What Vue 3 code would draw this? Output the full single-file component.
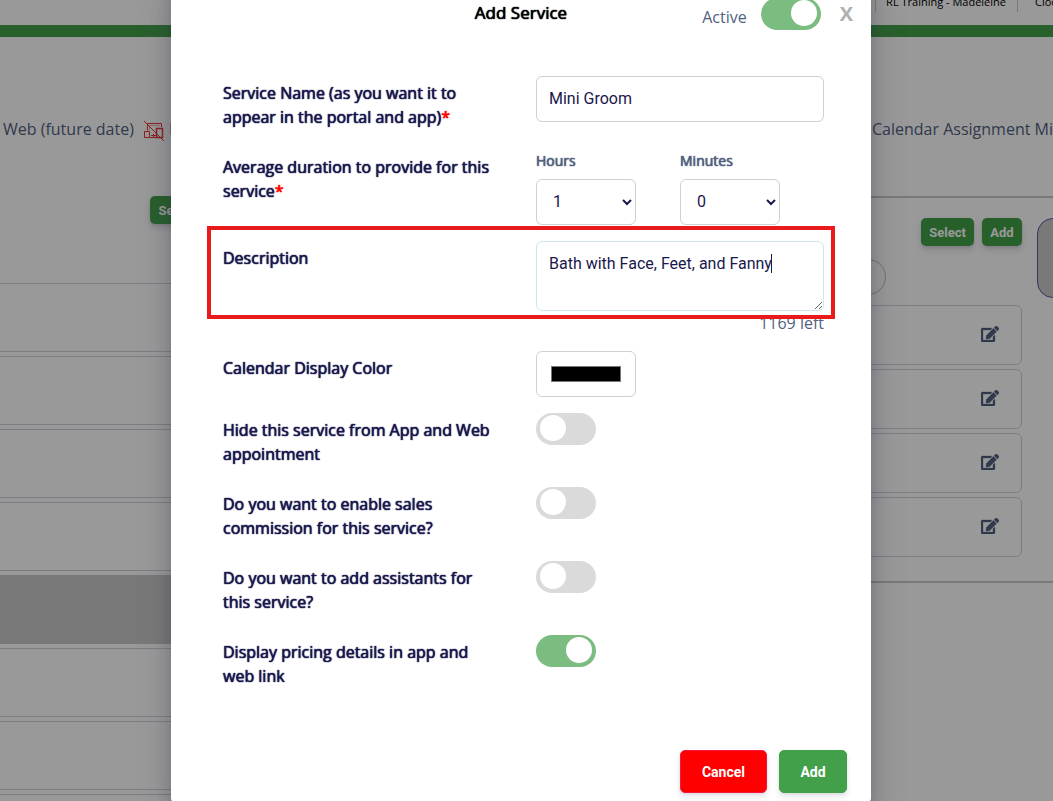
<script setup>
import { ref } from 'vue'

const active = ref(true)
const name = ref('Mini Groom')
const hours = ref('1')
const minutes = ref('0')
const description = ref('Bath with Face, Feet, and Fanny')
const color = ref('#000000')
const options = ref([
  { id: 'hide', label: 'Hide this service from App and Web appointment', on: false },
  { id: 'commission', label: 'Do you want to enable sales commission for this service?', on: false },
  { id: 'assistants', label: 'Do you want to add assistants for this service?', on: false },
  { id: 'pricing', label: 'Display pricing details in app and web link', on: true }
])
const rows = [0, 1, 2, 3, 4, 5, 6, 7]
const cards = [0, 1, 2, 3]
</script>

<template>
  <div class="screen">
    <div class="page">
      <header class="topbar">
        <span class="account">RL Training - Madeleine</span>
        <span class="clock">Clock</span>
      </header>
      <div class="legend">
        <div class="legend-left">
          <span>Web (future date)</span>
          <svg class="device" viewBox="0 0 20 20" fill="none" stroke="#e53935">
            <path d="M3.500 9.500V2.500H17.500V6M7 14.500H12M6 16.500H13M9.500 13V16" />
            <path d="M5 4.500H16M5.500 5V9" stroke-opacity=".4" />
            <path d="M.5 10.500H5.500V16.500H.5Z" />
            <path d="M12.500 7.500H18.500V16.500H12.500Z" stroke-width="1.500" />
            <path d="M0 0L20 20" />
          </svg>
          <span>I</span>
        </div>
        <div class="legend-right">Calendar Assignment Mi</div>
      </div>
      <div class="columns">
        <section class="left">
          <div class="left-actions"><button class="small" type="button">Select</button></div>
          <div class="rows">
            <div v-for="r in rows" :key="r" class="row" :class="{ selected: r === 4 }"></div>
          </div>
        </section>
        <section class="right">
          <div class="panel">
            <div class="panel-actions">
              <button class="small" type="button">Select</button>
              <button class="small" type="button">Add</button>
            </div>
            <input class="search" type="text" aria-label="Search" />
            <div class="cards">
              <div v-for="c in cards" :key="c" class="card">
                <button class="edit" type="button" aria-label="Edit">
                  <svg viewBox="0 0 576 512" fill="currentColor" stroke="currentColor" stroke-width="10">
                    <path d="M402.600 83.200l90.200 90.200c3.800 3.800 3.800 10 0 13.800L274.400 405.600l-92.800 10.300c-12.400 1.400-22.900-9.100-21.500-21.500l10.300-92.800L388.800 83.200c3.800-3.800 10-3.800 13.800 0zm162-22.900l-48.800-48.800c-15.200-15.200-39.900-15.200-55.200 0l-35.400 35.400c-3.800 3.800-3.800 10 0 13.800l90.200 90.200c3.800 3.800 10 3.800 13.800 0l35.400-35.400c15.200-15.300 15.200-40 0-55.200zM384 346.200V448H64V128h229.800c3.200 0 6.200-1.300 8.500-3.500l40-40c7.600-7.600 2.200-20.500-8.500-20.500H48C21.500 64 0 85.500 0 112v352c0 26.500 21.500 48 48 48h352c26.500 0 48-21.500 48-48V306.200c0-10.700-12.900-16-20.500-8.500l-40 40c-2.200 2.300-3.500 5.300-3.500 8.500z" />
                  </svg>
                </button>
              </div>
            </div>
          </div>
          <div class="side-tab"></div>
        </section>
      </div>
    </div>

    <div class="overlay">
      <form class="modal" role="dialog" aria-labelledby="dialog-title" @submit.prevent>
        <header class="modal-head">
          <h2 id="dialog-title">Add Service</h2>
          <div class="status">
            <label for="active">Active</label>
            <input id="active" v-model="active" class="toggle" type="checkbox" />
            <button class="close" type="button" aria-label="Close">X</button>
          </div>
        </header>

        <div class="fields">
          <div class="field">
            <label class="caption" for="name">Service Name (as you want it to appear in the portal and app)<span class="required">*</span></label>
            <input id="name" v-model="name" class="control" type="text" />
          </div>
          <div class="field">
            <span id="duration" class="caption">Average duration to provide for this service<span class="required">*</span></span>
            <div class="duration" role="group" aria-labelledby="duration">
              <div>
                <label class="unit" for="hours">Hours</label>
                <select id="hours" v-model="hours" class="control short">
                  <option>0</option>
                  <option>1</option>
                  <option>2</option>
                </select>
              </div>
              <div>
                <label class="unit" for="minutes">Minutes</label>
                <select id="minutes" v-model="minutes" class="control short">
                  <option>0</option>
                  <option>15</option>
                  <option>30</option>
                </select>
              </div>
            </div>
          </div>
          <div class="field marked">
            <label class="caption" for="description">Description</label>
            <div class="area-wrap">
              <textarea id="description" v-model="description" class="control area"></textarea>
              <span class="caret"></span>
              <div class="left-count">1169 left</div>
            </div>
          </div>
          <div class="field">
            <label class="caption" for="color">Calendar Display Color</label>
            <input id="color" v-model="color" class="control short swatch" type="color" />
          </div>
          <div v-for="o in options" :key="o.id" class="field">
            <label class="caption" :for="o.id">{{ o.label }}</label>
            <input :id="o.id" v-model="o.on" class="toggle" type="checkbox" />
          </div>
        </div>

        <footer class="modal-foot">
          <button class="action cancel" type="button">Cancel</button>
          <button class="action" type="submit">Add</button>
        </footer>
      </form>
    </div>
  </div>
</template>

<style>
body {
  margin: 0;
  overflow: hidden;
}
</style>

<style scoped>
* {
  box-sizing: border-box;
}
.screen {
  position: relative;
  height: 100vh;
  overflow: hidden;
  background: #fff;
  color: #525f7f;
  font-family: "Open Sans", sans-serif;
  font-size: 16px;
  line-height: 24px;
}
button,
input,
select,
textarea {
  font-family: Roboto, sans-serif;
}

/* page behind the dialog */
.page {
  margin-top: -24px;
}
.topbar {
  height: 61px;
  padding-top: 16px;
  border-bottom: 12px solid #43a04a;
  display: flex;
  justify-content: flex-end;
  align-items: flex-start;
  color: #000;
  font-size: 11px;
  line-height: 20px;
  white-space: nowrap;
}
.account {
  padding: 0 11px 0 10px;
  border-left: 1px solid #ccc;
  border-right: 1px solid #ccc;
}
.clock {
  flex: 0 0 35px;
  min-width: 0;
  padding-left: 17px;
  overflow: hidden;
}
.legend {
  display: flex;
  justify-content: space-between;
  padding-top: 80px;
  white-space: nowrap;
}
.legend-left {
  display: flex;
  align-items: center;
  padding-left: 3px;
}
.device {
  width: 20px;
  height: 20px;
  margin: 4px 5px 0 10px;
}
.legend-right {
  flex: 0 0 181px;
  overflow: hidden;
}
.columns {
  display: flex;
  justify-content: space-between;
  margin-top: 55px;
}
.left {
  width: 21%;
}
.left-actions {
  display: flex;
  justify-content: flex-end;
  padding-right: 18px;
}
.rows {
  display: grid;
  gap: 4px;
  margin-top: 59px;
}
.row {
  height: 69px;
  border: 1px solid #cbd3dc;
  border-left: 0;
}
.row.selected {
  background: #cacaca;
  border-color: #cacaca;
}
.small {
  min-width: 40px;
  height: 28px;
  padding: 0 8px;
  border: 0;
  border-radius: 5px;
  background: #43a04a;
  box-shadow: 0 4px 6px rgba(50, 50, 93, 0.15), 0 1px 3px rgba(0, 0, 0, 0.1);
  color: #fff;
  font-size: 13px;
  font-weight: 700;
}
.right {
  flex: 0 1 356px;
  display: flex;
  height: 387px;
  padding-top: 20px;
  border-top: 2px solid #cacaca;
  border-bottom: 2px solid #cacaca;
}
.panel {
  flex: 1;
}
.panel-actions {
  display: flex;
  justify-content: flex-end;
  gap: 8px;
}
.search {
  display: block;
  width: 58%;
  height: 36px;
  margin-top: 13px;
  border: 1px solid #bbb;
  border-radius: 18px;
}
.cards {
  display: grid;
  gap: 4px;
  margin-top: 10px;
}
.card {
  display: flex;
  align-items: center;
  justify-content: flex-end;
  height: 60px;
  padding: 0 22px 2px 0;
  border: 1px solid #cbd3dc;
  border-radius: 6px;
}
.edit {
  display: flex;
  padding: 0;
  border: 0;
  background: none;
  color: #525f7f;
}
.edit svg {
  width: 18px;
  height: 16px;
}
.side-tab {
  flex: 0 0 32px;
  height: 80px;
  margin: 0 -16px 0 15px;
  border: 1px solid #525f9f;
  border-radius: 16px;
  background: #cacaca;
}

/* dialog */
.overlay {
  position: absolute;
  inset: 0;
  padding-right: 11px;
  background: rgba(0, 0, 0, 0.4);
}
.modal {
  max-width: 700px;
  margin: -24px auto 0;
  background: #fff;
  border-radius: 4px;
  box-shadow: 0 15px 35px rgba(50, 50, 93, 0.25), 0 5px 15px rgba(0, 0, 0, 0.17);
}
.modal-head {
  display: grid;
  grid-template-columns: 1fr auto 1fr;
  align-items: start;
  padding: 22px 18px 0;
}
h2,
.caption,
.unit {
  font-weight: 400;
  text-shadow: 0 0 1px currentColor, 0 0 1px currentColor;
}
h2 {
  grid-column: 2;
  margin: 0;
  padding-top: 3px;
  color: #000;
  font-size: 17px;
  line-height: 24px;
}
.status {
  display: flex;
  justify-content: flex-end;
}
.status label {
  padding: 7px 14px 0 0;
}
.close {
  margin-left: 19px;
  padding: 0;
  border: 0;
  background: none;
  color: #b0b0b0;
  font-family: "Open Sans", sans-serif;
  font-size: 20px;
  font-weight: 700;
  line-height: 24px;
}
.toggle {
  appearance: none;
  position: relative;
  width: 60px;
  height: 32px;
  margin: 0;
  border-radius: 16px;
  background: #dadada;
}
.toggle::before {
  content: "";
  position: absolute;
  top: 2px;
  left: 4px;
  width: 26px;
  height: 26px;
  border-radius: 50%;
  background: #fff;
}
.toggle:checked {
  background: #7bbc80;
}
.toggle:checked::before {
  left: 30px;
}
.fields {
  display: grid;
  gap: 16px;
  padding: 46px 47px 0 52px;
}
.field {
  display: grid;
  grid-template-columns: 313px 1fr;
  align-items: start;
}
.caption {
  padding: 5px 40px 5px 0;
  color: #1a174d;
}
.required {
  color: #f00;
}
.control {
  display: block;
  width: 100%;
  height: 46px;
  margin: 0;
  padding: 10px 12px 12px;
  border: 1px solid #cad1d7;
  border-radius: 6px;
  background: #fff;
  color: #1a174d;
  font-size: 16px;
  line-height: 24px;
  outline: 0;
}
.control.short {
  width: 100px;
}
.duration {
  display: grid;
  grid-template-columns: 1fr 1fr;
}
.unit {
  display: block;
  margin-bottom: 8px;
  font-size: 14px;
  line-height: 21px;
}
.area-wrap {
  position: relative;
}
.control.area {
  height: 70px;
  border-color: #cbe7f3;
  resize: vertical;
  caret-color: transparent;
}
.caret {
  position: absolute;
  top: 13px;
  left: 235px;
  width: 1px;
  height: 19px;
  background: #1a174d;
  pointer-events: none;
}
.left-count {
  text-align: right;
}
.marked {
  position: relative;
}
.marked::after {
  content: "";
  position: absolute;
  inset: -15px -11px 16px -16px;
  border: 4px solid #e81a1c;
  pointer-events: none;
}
.control.swatch {
  padding: 14px;
}
.swatch::-webkit-color-swatch-wrapper {
  padding: 0;
}
.swatch::-webkit-color-swatch {
  border: 1px solid #777;
  border-radius: 0;
}
.modal-foot {
  display: flex;
  justify-content: flex-end;
  gap: 12px;
  padding: 57px 24px 9px;
}
.action {
  min-width: 68px;
  height: 43px;
  padding: 0 20px;
  border: 1px solid #43a04a;
  border-radius: 5px;
  background: #43a04a;
  box-shadow: 0 4px 6px rgba(50, 50, 93, 0.11), 0 1px 3px rgba(0, 0, 0, 0.08);
  color: #fff;
  font-size: 14px;
  font-weight: 700;
}
.cancel {
  padding: 0 21px;
  border-color: #f5173f;
  background: #f00;
}
</style>
